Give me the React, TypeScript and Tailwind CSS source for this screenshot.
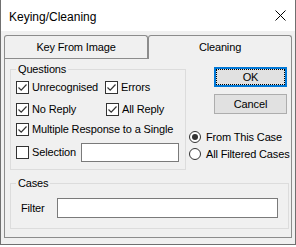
import React from "react";

function Check({ checked }: { checked: boolean }) {
  return (
    <span className="w-[13px] h-[13px] border border-[#333333] bg-white flex items-center justify-center shrink-0">
      {checked && (
        <svg width="11" height="11" viewBox="0 0 11 11">
          <path d="M1.5 5.5 L4.2 8.2 L9.5 2.5" fill="none" stroke="#333333" strokeWidth="1.2" />
        </svg>
      )}
    </span>
  );
}

function CheckItem({ label, checked, w }: { label: string; checked: boolean; w?: string }) {
  return (
    <div className={`flex items-center gap-[3px] whitespace-nowrap ${w ?? ""}`}>
      <Check checked={checked} />
      <span>{label}</span>
    </div>
  );
}

function Radio({ label, on }: { label: string; on: boolean }) {
  return (
    <div className="flex items-center gap-[5px] h-[12px] whitespace-nowrap">
      <span className="w-[12px] h-[12px] rounded-full border border-[#333333] bg-white flex items-center justify-center shrink-0">
        {on && <span className="w-[6px] h-[6px] rounded-full bg-[#333333]" />}
      </span>
      <span>{label}</span>
    </div>
  );
}

export default function App() {
  return (
    <div className="w-[296px] h-[247px] bg-white text-black text-[11px] leading-[13px] tracking-[-0.15px] font-['Liberation_Sans',Arial,sans-serif]">
      <div className="h-[245px] border-x border-b border-[#707070] bg-[#f0f0f0] flex flex-col">
        {/* title bar */}
        <div className="h-[31px] bg-white flex justify-between shrink-0">
          <span className="pl-[8px] pt-[10px] text-[12px] leading-[14px] tracking-normal">Keying/Cleaning</span>
          <svg className="mt-[10px] mr-[9px]" width="11" height="11" viewBox="0 0 11 11">
            <path d="M0.5 0.5 L10.5 10.5 M10.5 0.5 L0.5 10.5" stroke="#000" strokeWidth="1" />
          </svg>
        </div>

        <div className="px-[3px] pt-[4px]">
          {/* tabs */}
          <div className="flex h-[23px]">
            <div className="w-[144px] h-[23px] border border-b-0 border-[#8c8c8c] rounded-t-[3px] flex items-center justify-center">
              Key From Image
            </div>
            <div className="flex-1 h-[24px] relative z-10 bg-[#f0f0f0] border border-b-0 border-[#8c8c8c] rounded-t-[3px] flex items-center justify-center pb-px">
              Cleaning
            </div>
          </div>

          {/* panel */}
          <div className="h-[180px] border border-[#8c8c8c] pl-[5px] pt-[4px]">
            <div className="flex">
              <fieldset className="w-[176px] border border-[#dcdcdc] pl-[5px] pb-[7px]">
                <legend className="px-[2px]">Questions</legend>
                <div className="mt-[5px] h-[13px] flex">
                  <CheckItem label="Unrecognised" checked w="w-[89px]" />
                  <CheckItem label="Errors" checked />
                </div>
                <div className="mt-[9px] h-[13px] flex">
                  <CheckItem label="No Reply" checked w="w-[90px]" />
                  <CheckItem label="All Reply" checked />
                </div>
                <div className="mt-[7px] h-[13px] flex">
                  <CheckItem label="Multiple Response to a Single" checked />
                </div>
                <div className="mt-[7px] h-[19px] flex items-center">
                  <CheckItem label="Selection" checked={false} />
                  <div className="ml-[5px] w-[98px] h-[19px] border border-[#7a7a7a] bg-white" />
                </div>
              </fieldset>

              <div className="ml-[3px] w-[98px] flex flex-col">
                <button className="mt-[4px] self-end w-[73px] h-[20px] border-2 border-[#0078d7] bg-[#e1e1e1] p-0">
                  <div className="h-full border border-dotted border-black flex items-center justify-center">OK</div>
                </button>
                <button className="mt-[7px] self-end w-[73px] h-[20px] border border-[#adadad] bg-[#e1e1e1] flex items-center justify-center">
                  Cancel
                </button>
                <div className="mt-[17px]">
                  <Radio label="From This Case" on />
                </div>
                <div className="mt-[5px]">
                  <Radio label="All Filtered Cases" on={false} />
                </div>
              </div>
            </div>

            <fieldset className="mt-[7px] w-[279px] border border-[#dcdcdc] pl-[10px] pb-[10px]">
              <legend className="-ml-[5px] px-[2px]">Cases</legend>
              <div className="mt-[8px] h-[20px] flex items-center">
                <span>Filter</span>
                <div className="ml-[12px] w-[221px] h-[20px] border border-[#7a7a7a] bg-white" />
              </div>
            </fieldset>
          </div>
        </div>
      </div>
    </div>
  );
}
